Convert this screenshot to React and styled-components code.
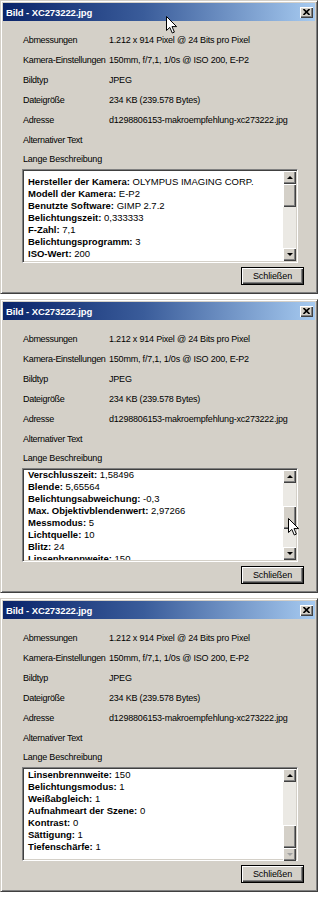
import React from "react";
import styled, { createGlobalStyle } from "styled-components";

const info = [
    ["Abmessungen", "1.212 x 914 Pixel @ 24 Bits pro Pixel"],
    ["Kamera-Einstellungen", "150mm, f/7,1, 1/0s @ ISO 200, E-P2"],
    ["Bildtyp", "JPEG"],
    ["Dateigröße", "234 KB (239.578 Bytes)"],
    ["Adresse", "d1298806153-makroempfehlung-xc273222.jpg"],
    ["Alternativer Text", ""],
];

const dialogs = [
    {
        offset: 5,
        thumb: 0,
        atEnd: false,
        cursor: { x: 165, y: 15 },
        lines: [
            ["Hersteller der Kamera:", "OLYMPUS IMAGING CORP."],
            ["Modell der Kamera:", "E-P2"],
            ["Benutzte Software:", "GIMP 2.7.2"],
            ["Belichtungszeit:", "0,333333"],
            ["F-Zahl:", "7,1"],
            ["Belichtungsprogramm:", "3"],
            ["ISO-Wert:", "200"],
        ],
    },
    {
        offset: -1,
        thumb: 23,
        atEnd: false,
        cursor: { x: 287, y: 218 },
        lines: [
            ["Verschlusszeit:", "1,58496"],
            ["Blende:", "5,65564"],
            ["Belichtungsabweichung:", "-0,3"],
            ["Max. Objektivblendenwert:", "2,97266"],
            ["Messmodus:", "5"],
            ["Lichtquelle:", "10"],
            ["Blitz:", "24"],
            ["Linsenbrennweite:", "150"],
        ],
    },
    {
        offset: 0,
        thumb: 43,
        atEnd: true,
        lines: [
            ["Linsenbrennweite:", "150"],
            ["Belichtungsmodus:", "1"],
            ["Weißabgleich:", "1"],
            ["Aufnahmeart der Szene:", "0"],
            ["Kontrast:", "0"],
            ["Sättigung:", "1"],
            ["Tiefenschärfe:", "1"],
        ],
    },
];

function Cursor({ x, y }) {
    return (
        <Pointer $x={x} $y={y} width="12" height="18" viewBox="0 0 12 18">
            <path d="M0.5 0.5 L0.5 14.5 L3.8 11.4 L6.3 17 L8.4 16.1 L6 10.6 L10.6 10.6 Z" fill="#fff" stroke="#000" strokeWidth="1" strokeLinejoin="round" />
        </Pointer>
    );
}

function Arrow({ down, disabled }) {
    return (
        <ArrowBtn>
            <Triangle $down={down} $disabled={disabled} />
        </ArrowBtn>
    );
}

function Dialog({ data }) {
    return (
        <Window>
            <TitleBar>
                <span>Bild - XC273222.jpg</span>
                <CloseBtn>
                    <svg width="7" height="6" viewBox="0 0 7 6">
                        <path d="M0.5 0 L6.5 6 M6.5 0 L0.5 6" stroke="#000" strokeWidth="1.6" />
                    </svg>
                </CloseBtn>
            </TitleBar>
            <Body>
                <InfoGrid>
                    {info.map(([k, v]) => (
                        <React.Fragment key={k}>
                            <Label>{k}</Label>
                            <Value>{v}</Value>
                        </React.Fragment>
                    ))}
                </InfoGrid>
                <Caption>Lange Beschreibung</Caption>
                <TextBox>
                    <TextArea>
                        <TextContent $offset={data.offset}>
                            {data.lines.map(([k, v]) => (
                                <Line key={k}>
                                    <b>{k}</b> {v}
                                </Line>
                            ))}
                        </TextContent>
                    </TextArea>
                    <ScrollBar>
                        <Arrow />
                        <Track>
                            <Thumb $top={data.thumb} />
                        </Track>
                        <Arrow down disabled={data.atEnd} />
                    </ScrollBar>
                </TextBox>
                <Footer>
                    <Button>Schließen</Button>
                </Footer>
            </Body>
            {data.cursor && <Cursor x={data.cursor.x} y={data.cursor.y} />}
        </Window>
    );
}

export default function App() {
    return (
        <>
            <GlobalStyle />
            <Stack>
                {dialogs.map((d, i) => (
                    <Dialog key={i} data={d} />
                ))}
            </Stack>
        </>
    );
}

const GlobalStyle = createGlobalStyle`
    body {
        margin: 0;
        background: #ffffff;
        font-family: "Liberation Sans", Arial, sans-serif;
        color: #000;
    }
`;

const Stack = styled.div`
    display: flex;
    flex-direction: column;
    gap: 5px;
    width: 318px;
`;

const Window = styled.section`
    position: relative;
    width: 318px;
    height: 294px;
    box-sizing: border-box;
    background: #d4d0c8;
    border: 1px solid;
    border-color: #d4d0c8 #404040 #404040 #d4d0c8;
    box-shadow: inset 1px 1px #fff, inset -1px -1px #808080;
    padding: 2px;
    display: flex;
    flex-direction: column;
`;

const TitleBar = styled.div`
    height: 18px;
    flex-shrink: 0;
    display: flex;
    align-items: center;
    justify-content: space-between;
    padding: 0 2px 0 3px;
    background: linear-gradient(to right, #0a246a, #3a5c9a 45%, #a6caf0);
    color: #fff;
    font-weight: bold;
    font-size: 9.5px;
    letter-spacing: -0.1px;
`;

const CloseBtn = styled.div`
    width: 13px;
    height: 11px;
    box-sizing: border-box;
    background: #d4d0c8;
    display: flex;
    align-items: center;
    justify-content: center;
    box-shadow: inset 1px 1px #fff, inset -1px -1px #404040, inset -2px -2px #808080;
`;

const Body = styled.div`
    flex: 1;
    display: flex;
    flex-direction: column;
    padding: 9px 11px 0 19px;
    font-size: 9px;
    letter-spacing: -0.2px;
`;

const InfoGrid = styled.div`
    display: grid;
    grid-template-columns: 87px 1fr;
    grid-auto-rows: 20px;
    align-items: center;
`;

const Label = styled.div`
    padding-left: 1px;
    white-space: nowrap;
    letter-spacing: -0.3px;
`;

const Value = styled.div`
    white-space: nowrap;
`;

const Caption = styled.div`
    height: 18px;
    display: flex;
    align-items: center;
    padding-left: 1px;
`;

const TextBox = styled.div`
    height: 94px;
    margin-top: 1px;
    margin-right: 6px;
    box-sizing: border-box;
    border: 1px solid;
    border-color: #808080 #fff #fff #808080;
    box-shadow: inset 1px 1px #404040, inset -1px -1px #d4d0c8;
    padding: 1px;
    background: #fff;
    display: flex;
`;

const TextArea = styled.div`
    flex: 1;
    overflow: hidden;
    padding: 0 4px;
    font-size: 9.5px;
    letter-spacing: 0;
`;

const TextContent = styled.div`
    margin-top: ${(p) => p.$offset}px;
`;

const Line = styled.div`
    line-height: 12px;
    white-space: nowrap;
`;

const ScrollBar = styled.div`
    width: 13px;
    display: flex;
    flex-direction: column;
    background: #ebe9e4;
`;

const ArrowBtn = styled.div`
    height: 13px;
    flex-shrink: 0;
    background: #d4d0c8;
    display: flex;
    align-items: center;
    justify-content: center;
    box-shadow: inset 1px 1px #fff, inset -1px -1px #404040, inset -2px -2px #808080;
`;

const Triangle = styled.div`
    width: 0;
    height: 0;
    border-left: 3px solid transparent;
    border-right: 3px solid transparent;
    ${(p) => (p.$down ? "border-top" : "border-bottom")}: 3px solid ${(p) => (p.$disabled ? "#a0a0a0" : "#000")};
`;

const Track = styled.div`
    flex: 1;
`;

const Thumb = styled.div`
    height: 23px;
    margin-top: ${(p) => p.$top}px;
    background: #d4d0c8;
    box-shadow: inset 1px 1px #fff, inset -1px -1px #404040, inset -2px -2px #808080;
`;

const Footer = styled.div`
    display: flex;
    justify-content: flex-end;
    margin-top: 4px;
`;

const Button = styled.button`
    width: 63px;
    height: 18px;
    padding: 0;
    font-family: inherit;
    font-size: 9px;
    letter-spacing: -0.1px;
    color: #000;
    background: #d4d0c8;
    border: 1px solid #000;
    box-shadow: inset 1px 1px #fff, inset -1px -1px #404040, inset -2px -2px #808080;
`;

const Pointer = styled.svg`
    position: absolute;
    left: ${(p) => p.$x}px;
    top: ${(p) => p.$y}px;
`;
